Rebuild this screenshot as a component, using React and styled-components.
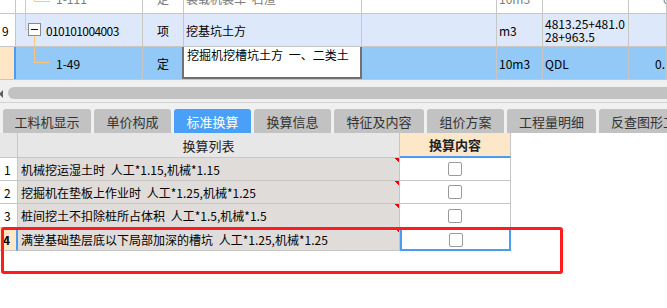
import React from "react";
import styled, { createGlobalStyle } from "styled-components";

const GlobalStyle = createGlobalStyle`
  html, body { margin: 0; padding: 0; background: #ffffff; }
  body {
    font-family: "Noto Sans CJK SC", "Liberation Sans", sans-serif;
    font-size: 12px;
    color: #000;
  }
  * { box-sizing: border-box; }
`;

const LINE = "#c6c6c6";
const ORANGE = "#fdc57c";
const BLUE = "#4a9cf2";

const Page = styled.div`
  position: relative;
  width: 667px;
  height: 308px;
  overflow: hidden;
  background: #fff;
  display: flex;
  flex-direction: column;
`;

/* ---------- top tree grid ---------- */
const TopGrid = styled.div`
  display: flex;
  flex-direction: column;
  flex: none;
`;

const TopRow = styled.div`
  display: grid;
  grid-template-columns: 16px 127px 41px 178px 135px 46px 86px 1fr;
  height: ${(p) => p.$h}px;
  background: ${(p) => p.$bg || "#fff"};
  border-bottom: 1px solid ${LINE};
  overflow: hidden;
`;

const Cell = styled.div`
  display: flex;
  align-items: ${(p) => (p.$top ? "flex-start" : "center")};
  justify-content: ${(p) => (p.$center ? "center" : "flex-start")};
  padding-left: ${(p) => (p.$pl !== undefined ? p.$pl : 2)}px;
  border-right: 1px solid ${LINE};
  white-space: nowrap;
  overflow: hidden;
  line-height: 13px;
  min-width: 0;
  word-spacing: 3px;
`;

const NumCell = styled(Cell)`
  background: ${(p) => (p.$active ? "#ffe6c7" : "#fff")};
  border-right: ${(p) => (p.$active ? `2px solid ${BLUE}` : `1px solid ${LINE}`)};
`;

const Clipped = styled.span`
  color: #7c7c7c;
  line-height: 14px;
  margin-top: -8px;
`;

const Code = styled.span`
  letter-spacing: -0.6px;
`;

const MultiLine = styled.span`
  white-space: pre-line;
  line-height: 13px;
`;

const Editor = styled(Cell)`
  background: #fff;
  border: 2px solid #717171;
  border-top: none;
  margin-left: -2px;
  padding-top: 1px;
`;

function TreeLines({ kind }) {
  if (kind === "parent") {
    return (
      <svg width="30" height="32" style={{ flex: "none" }}>
        <line x1="9.5" y1="0" x2="9.5" y2="15.5" stroke={ORANGE} />
        <line x1="9.5" y1="15.5" x2="12" y2="15.5" stroke={ORANGE} />
        <line x1="18.5" y1="21" x2="18.5" y2="32" stroke={ORANGE} />
        <rect x="12.5" y="9.5" width="12" height="12" fill="#fff" stroke="#8a8a8a" />
        <line x1="15" y1="15.5" x2="22" y2="15.5" stroke="#111" />
      </svg>
    );
  }
  if (kind === "child") {
    return (
      <svg width="40" height="32" style={{ flex: "none" }}>
        <line x1="18.5" y1="0" x2="18.5" y2="15.5" stroke={ORANGE} />
        <line x1="18.5" y1="15.5" x2="34" y2="15.5" stroke={ORANGE} />
      </svg>
    );
  }
  return (
    <svg width="40" height="13" style={{ flex: "none", alignSelf: "flex-start" }}>
      <line x1="9.5" y1="0" x2="9.5" y2="13" stroke={ORANGE} />
      <line x1="18.5" y1="0" x2="18.5" y2="1.5" stroke={ORANGE} />
      <line x1="18.5" y1="1.5" x2="34" y2="1.5" stroke={ORANGE} />
    </svg>
  );
}

/* ---------- scroll bar ---------- */
const HScroll = styled.div`
  flex: none;
  height: 23px;
  background: #efefef;
  border-bottom: 1px solid #d2d2d2;
  display: flex;
  align-items: flex-start;
  padding-top: 7px;
  gap: 5px;
`;

const ArrowLeft = styled.span`
  flex: none;
  width: 0;
  height: 0;
  margin: 3px 0 0 -1px;
  border-top: 4px solid transparent;
  border-bottom: 4px solid transparent;
  border-right: 4px solid #5f5f5f;
`;

const Thumb = styled.div`
  flex: 1;
  height: 12px;
  background: #c2c2c2;
  border-radius: 6px 0 0 6px;
`;

/* ---------- tabs ---------- */
const TabBar = styled.div`
  flex: none;
  height: 30px;
  display: flex;
  gap: 3px;
  padding: 6px 0 0 3px;
  background: #f0f0f0;
  overflow: hidden;
`;

const Tab = styled.div`
  flex: none;
  width: ${(p) => p.$w}px;
  height: 24px;
  display: flex;
  align-items: center;
  justify-content: ${(p) => (p.$clip ? "flex-start" : "center")};
  padding-left: ${(p) => (p.$clip ? 12 : 0)}px;
  white-space: nowrap;
  overflow: hidden;
  border-radius: 3px 3px 0 0;
  font-size: 13px;
  background: ${(p) => (p.$active ? "#4a9ff6" : "#c2c2c2")};
  color: ${(p) => (p.$active ? "#fff" : "#333")};
`;

/* ---------- bottom grid ---------- */
const BottomGrid = styled.div`
  flex: none;
  display: flex;
  flex-direction: column;
`;

const BRow = styled.div`
  display: grid;
  grid-template-columns: 18px 382px 111px 1fr;
  height: ${(p) => p.$h}px;
`;

const HeadCell = styled.div`
  display: flex;
  align-items: center;
  justify-content: center;
  font-size: 13px;
  color: #222;
  font-weight: ${(p) => (p.$bold ? 700 : 400)};
  background: ${(p) => (p.$peach ? "#fde7c9" : "#e7e7e7")};
  border-right: 1px solid ${LINE};
  border-bottom: ${(p) => (p.$peach ? `2px solid ${BLUE}` : `1px solid ${LINE}`)};
`;

const RowNum = styled.div`
  display: flex;
  align-items: center;
  padding-left: ${(p) => (p.$active ? 3 : 4)}px;
  font-weight: ${(p) => (p.$active ? 700 : 400)};
  background: ${(p) => (p.$active ? "#ffe7c7" : "#fff")};
  border-right: ${(p) => (p.$active ? `2px solid ${BLUE}` : `1px solid ${LINE}`)};
  border-bottom: 1px solid ${LINE};
`;

const ListCell = styled.div`
  display: flex;
  align-items: center;
  padding-left: 3px;
  white-space: nowrap;
  overflow: hidden;
  word-spacing: 3px;
  background:
    linear-gradient(225deg, #f00000 0 3.5px, transparent 3.5px) top right / 7px 7px no-repeat,
    #e0dcd9;
  border-right: 1px solid ${LINE};
  border-bottom: 1px solid ${LINE};
`;

const CheckCell = styled.div`
  display: flex;
  align-items: center;
  justify-content: center;
  background: #fff;
  border-right: ${(p) => (p.$sel ? `2px solid ${BLUE}` : `1px solid ${LINE}`)};
  border-bottom: ${(p) => (p.$sel ? `2px solid ${BLUE}` : `1px solid ${LINE}`)};
  border-left: ${(p) => (p.$sel ? `2px solid ${BLUE}` : "none")};
  border-top: ${(p) => (p.$sel ? `2px solid ${BLUE}` : "none")};
`;

const Checkbox = styled.span`
  width: 14px;
  height: 14px;
  border: 1px solid #9a9a9a;
  border-radius: 2px;
  background: #fff;
`;

const Blank = styled.div``;

const Annotation = styled.div`
  position: absolute;
  left: 1px;
  top: 227px;
  width: 562px;
  height: 47px;
  border: 3px solid #ff1c1c;
  border-radius: 3px;
  pointer-events: none;
`;

const tabs = [
  { label: "工料机显示", w: 88 },
  { label: "单价构成", w: 77 },
  { label: "标准换算", w: 77, active: true },
  { label: "换算信息", w: 77 },
  { label: "特征及内容", w: 90 },
  { label: "组价方案", w: 77 },
  { label: "工程量明细", w: 89 },
  { label: "反查图形工程量", w: 100, clip: true },
];

const rules = [
  "机械挖运湿土时 人工*1.15,机械*1.15",
  "挖掘机在垫板上作业时 人工*1.25,机械*1.25",
  "桩间挖土不扣除桩所占体积 人工*1.5,机械*1.5",
  "满堂基础垫层底以下局部加深的槽坑 人工*1.25,机械*1.25",
];

export default function App() {
  return (
    <Page>
      <GlobalStyle />
      <TopGrid>
        <TopRow $h={14}>
          <NumCell />
          <Cell $pl={0} $top>
            <TreeLines kind="prev" />
            <Clipped>1-111</Clipped>
          </Cell>
          <Cell $center $top $pl={0}>
            <Clipped>定</Clipped>
          </Cell>
          <Cell $top>
            <Clipped>装载机装车 石渣</Clipped>
          </Cell>
          <Cell />
          <Cell $top>
            <Clipped>10m3</Clipped>
          </Cell>
          <Cell />
          <Cell $top $pl={34}>
            <Clipped>0</Clipped>
          </Cell>
        </TopRow>
        <TopRow $h={33} $bg="#dde9fb">
          <NumCell>9</NumCell>
          <Cell $pl={0}>
            <TreeLines kind="parent" />
            <Code>010101004003</Code>
          </Cell>
          <Cell $center $pl={0}>项</Cell>
          <Cell>挖基坑土方</Cell>
          <Cell />
          <Cell>m3</Cell>
          <Cell>
            <MultiLine>{"4813.25+481.0\n28+963.5"}</MultiLine>
          </Cell>
          <Cell />
        </TopRow>
        <TopRow $h={33} $bg="#92c9f6">
          <NumCell $active />
          <Cell $pl={0}>
            <TreeLines kind="child" />
            <span>1-49</span>
          </Cell>
          <Cell $center $pl={0}>定</Cell>
          <Editor $top $pl={3}>挖掘机挖槽坑土方 一、二类土</Editor>
          <Cell />
          <Cell>10m3</Cell>
          <Cell>QDL</Cell>
          <Cell $pl={26}>0.</Cell>
        </TopRow>
      </TopGrid>

      <HScroll>
        <ArrowLeft />
        <Thumb />
      </HScroll>

      <TabBar>
        {tabs.map((t) => (
          <Tab key={t.label} $w={t.w} $active={t.active} $clip={t.clip}>
            {t.label}
          </Tab>
        ))}
      </TabBar>

      <BottomGrid>
        <BRow $h={25}>
          <HeadCell />
          <HeadCell>换算列表</HeadCell>
          <HeadCell $peach $bold>换算内容</HeadCell>
          <Blank />
        </BRow>
        {rules.map((r, i) => {
          const active = i === rules.length - 1;
          return (
            <BRow key={r} $h={i === 2 ? 24 : 23}>
              <RowNum $active={active}>{i + 1}</RowNum>
              <ListCell>{r}</ListCell>
              <CheckCell $sel={active}>
                <Checkbox />
              </CheckCell>
              <Blank />
            </BRow>
          );
        })}
      </BottomGrid>

      <Annotation />
    </Page>
  );
}
